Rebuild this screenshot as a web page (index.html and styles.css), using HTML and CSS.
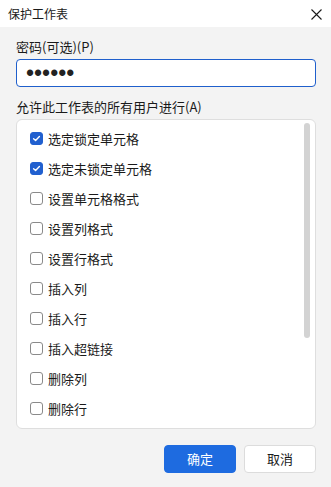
FILE: index.html
```html
<!DOCTYPE html>
<html lang="zh-CN">
<head>
    <meta charset="UTF-8">
    <meta name="viewport" content="width=device-width, initial-scale=1.0">
    <title>保护工作表</title>
    <link rel="stylesheet" href="styles.css">
</head>
<body>
    <div class="dialog">
        <header class="title-bar">
            <span class="title">保护工作表</span>
            <button class="close-btn" aria-label="关闭">
                <svg width="11" height="11" viewBox="0 0 11 11">
                    <path d="M0.5 0.5 L10.5 10.5 M10.5 0.5 L0.5 10.5" stroke="#1a1a1a" stroke-width="1.1" fill="none"/>
                </svg>
            </button>
        </header>

        <main class="dialog-body">
            <label class="field-label" for="password">密码(可选)(P)</label>
            <input type="password" id="password" class="password-input" value="123456">

            <div class="field-label">允许此工作表的所有用户进行(A)</div>
            <div class="perm-list">
                <ul class="perm-items" id="permItems"></ul>
                <div class="scroll-thumb"></div>
            </div>

            <div class="actions">
                <button class="btn btn-primary">确定</button>
                <button class="btn btn-default">取消</button>
            </div>
        </main>
    </div>

    <script>
        // Permission options
        const permissions = [
            { label: '选定锁定单元格', checked: true },
            { label: '选定未锁定单元格', checked: true },
            { label: '设置单元格格式', checked: false },
            { label: '设置列格式', checked: false },
            { label: '设置行格式', checked: false },
            { label: '插入列', checked: false },
            { label: '插入行', checked: false },
            { label: '插入超链接', checked: false },
            { label: '删除列', checked: false },
            { label: '删除行', checked: false }
        ];

        const list = document.getElementById('permItems');
        permissions.forEach(perm => {
            const li = document.createElement('li');
            li.className = 'perm-item';
            li.innerHTML = `
                <label>
                    <input type="checkbox" ${perm.checked ? 'checked' : ''}>
                    <span class="box"></span>
                    <span>${perm.label}</span>
                </label>
            `;
            list.appendChild(li);
        });
    </script>
</body>
</html>
```

FILE: styles.css
```css
* {
    margin: 0;
    padding: 0;
    box-sizing: border-box;
    font-family: 'Segoe UI', 'Noto Sans CJK SC', 'Noto Sans', sans-serif;
}

body {
    background: #f3f3f3;
    color: #1a1a1a;
    font-size: 13px;
    min-height: 100vh;
}

.title-bar {
    background: white;
    height: 27px;
    display: flex;
    justify-content: space-between;
    align-items: center;
    padding: 0 9px 0 8px;
}

.title {
    font-size: 12px;
}

.close-btn {
    border: none;
    background: none;
    width: 11px;
    height: 11px;
    display: flex;
    margin-top: 1px;
}

.dialog-body {
    padding: 0 15px 0 16px;
}

.field-label {
    display: block;
    height: 20px;
    line-height: 20px;
    margin-top: 10px;
    margin-bottom: 2px;
}

.password-input {
    display: block;
    width: 100%;
    height: 28px;
    border: 1px solid #1f5fcc;
    border-radius: 4px;
    background: white;
    padding: 0 9px;
    font-family: 'Liberation Sans', sans-serif;
    font-size: 23px;
    letter-spacing: 0;
    color: #222;
    outline: none;
    margin-bottom: 4px;
}

.perm-list {
    position: relative;
    height: 310px;
    background: white;
    border: 1px solid #dedede;
    border-radius: 6px;
    overflow: hidden;
    margin-top: 1px;
}

.perm-items {
    list-style: none;
    padding-top: 3px;
}

.perm-item label {
    display: flex;
    align-items: center;
    height: 30px;
    padding-left: 13px;
    gap: 5px;
}

.perm-item input {
    display: none;
}

.box {
    width: 13px;
    height: 13px;
    border: 1px solid #8a8a8a;
    border-radius: 3px;
    background: white;
}

.perm-item input:checked + .box {
    background: #2160cf url("data:image/svg+xml,%3Csvg xmlns='http://www.w3.org/2000/svg' viewBox='0 0 13 13'%3E%3Cpath d='M3.6 6.8 L5.6 8.6 L9.4 4.6' stroke='white' stroke-width='1.4' fill='none' stroke-linecap='round' stroke-linejoin='round'/%3E%3C/svg%3E") center / 13px 13px no-repeat;
    border-color: #2160cf;
}

.scroll-thumb {
    position: absolute;
    top: 3px;
    right: 5px;
    width: 6px;
    height: 215px;
    border-radius: 3px;
    background: #d3d3d3;
}

.actions {
    display: flex;
    justify-content: flex-end;
    gap: 8px;
    margin-top: 16px;
}

.btn {
    width: 72px;
    height: 28px;
    line-height: 26px;
    border-radius: 4px;
    font-size: 13px;
    cursor: pointer;
}

.btn-primary {
    background: #1e6be0;
    border: 1px solid #1e6be0;
    color: white;
}

.btn-default {
    background: white;
    border: 1px solid #dcdcdc;
    color: #1a1a1a;
}
```
